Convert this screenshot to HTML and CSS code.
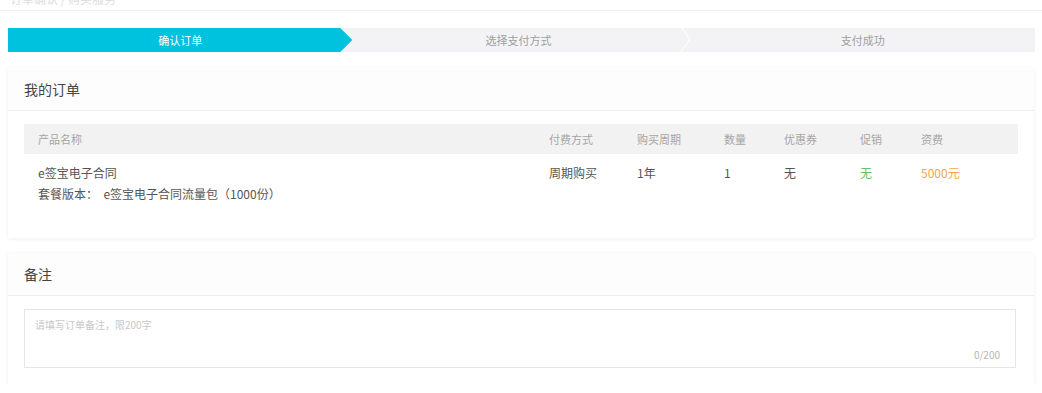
FILE: index.html
```html
<!DOCTYPE html>
<html>
<head>
    <title>确认订单</title>
    <meta charset="utf-8">
    <link rel="stylesheet" href="styles.css">
</head>
<body>

<div class="topbar"><span>订单确认 / 购买服务</span></div>

<div class="steps">
    <div class="step active">确认订单</div>
    <div class="step sep">选择支付方式</div>
    <div class="step">支付成功</div>
</div>

<div class="card">
    <div class="card-title">我的订单</div>
    <div class="card-body order-body">
        <div class="row head">
            <div class="cell first">产品名称</div>
            <div class="cell">付费方式</div>
            <div class="cell">购买周期</div>
            <div class="cell">数量</div>
            <div class="cell">优惠券</div>
            <div class="cell">促销</div>
            <div class="cell">资费</div>
        </div>
        <div class="row item">
            <div class="cell first">
                e签宝电子合同<br>
                套餐版本：&nbsp; e签宝电子合同流量包（1000份）
            </div>
            <div class="cell">周期购买</div>
            <div class="cell">1年</div>
            <div class="cell">1</div>
            <div class="cell">无</div>
            <div class="cell green">无</div>
            <div class="cell orange">5000元</div>
        </div>
    </div>
</div>

<div class="card">
    <div class="card-title">备注</div>
    <div class="card-body note-body">
        <div class="note">
            <textarea placeholder="请填写订单备注，限200字" maxlength="200"></textarea>
            <div class="count">0/200</div>
        </div>
    </div>
</div>

</body>
</html>
```

FILE: styles.css
```css
body {
    margin: 0px;
    background: #fff;
    font-family: "Noto Sans CJK SC", "Liberation Sans", sans-serif;
    color: #555;
}

.topbar {
    height: 10px;
    overflow: hidden;
    border-bottom: 1px solid #f0f0f2;
    padding-left: 10px;
    font-size: 12px;
    color: #ddd;
}

.topbar span {
    display: block;
    line-height: 14px;
    margin-top: -8px;
}

.steps {
    display: flex;
    margin: 17px 7px 0px 8px;
    height: 24px;
    background: #f3f3f5;
}

.step {
    flex: 1;
    position: relative;
    font-size: 11px;
    line-height: 24px;
    text-align: center;
    color: #a0a0a0;
}

.step.active {
    background: #00c1de;
    color: #fff;
    margin-right: -6px;
    clip-path: polygon(0 0, calc(100% - 12px) 0, 100% 50%, calc(100% - 12px) 100%, 0 100%);
}

.step.sep::after {
    content: "";
    position: absolute;
    right: 2px;
    top: 1px;
    width: 15px;
    height: 15px;
    border-top: 1px solid #fff;
    border-right: 1px solid #fff;
    transform: translateY(2px) rotate(45deg) skew(10deg, 10deg);
}

.card {
    margin: 16px 8px 0px 8px;
    background: #fff;
    box-shadow: 0 1px 4px rgba(0, 0, 0, 0.07);
}

.card + .card {
    margin-top: 15px;
}

.card-title {
    height: 42px;
    line-height: 42px;
    padding-left: 16px;
    font-size: 14px;
    color: #444;
    background: #fdfdfd;
    border-bottom: 1px solid #eeeef0;
}

.card-body {
    padding: 13px 16px 0px 16px;
}

.order-body {
    padding-bottom: 24px;
}

.row {
    display: grid;
    grid-template-columns: 525px 88px 87px 60px 76px 61px 1fr;
}

.row.head {
    background: #f2f2f2;
    height: 30px;
    line-height: 30px;
    font-size: 11px;
    color: #a5a5a5;
}

.row.item {
    padding: 8px 0px 10px 0px;
    font-size: 12px;
    line-height: 21px;
    color: #555;
}

.cell.first {
    padding-left: 14px;
}

.green {
    color: #6cc26c;
}

.orange {
    color: #f7a54a;
}

.note-body {
    padding-right: 18px;
    padding-bottom: 17px;
}

.note {
    position: relative;
    border: 1px solid #e6e6e6;
    height: 57px;
}

.note textarea {
    display: block;
    width: 100%;
    height: 100%;
    box-sizing: border-box;
    border: none;
    resize: none;
    outline: none;
    padding: 7px 10px;
    font: 10px "Noto Sans CJK SC", "Liberation Sans", sans-serif;
    color: #555;
}

.note textarea::placeholder {
    color: #c8c8c8;
}

.count {
    position: absolute;
    right: 15px;
    bottom: 5px;
    font-size: 10px;
    color: #b5b5b5;
}
```
